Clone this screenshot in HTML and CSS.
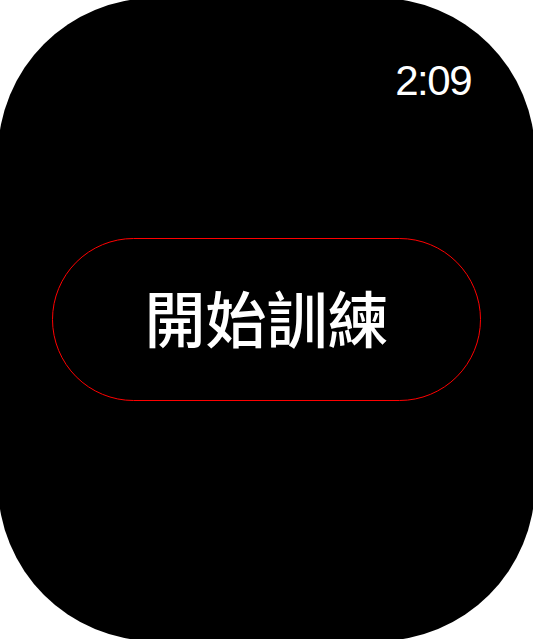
FILE: index.html
```html
<!DOCTYPE html>
<html lang="zh-Hant">
<head>
<meta charset="utf-8">
<title>開始訓練</title>
<link rel="stylesheet" href="styles.css">
</head>
<body>
<div class="screen">
  <div class="time">2:09</div>
  <button class="start-btn">開始訓練</button>
</div>
</body>
</html>
```

FILE: styles.css
```css
html, body {
  margin: 0;
  padding: 0;
  background: #ffffff;
  overflow: hidden;
}

.screen {
  box-sizing: border-box;
  width: calc(100vw + 4px);
  height: calc(100vh + 4px);
  margin: -2px;
  background: #000000;
  border-radius: 157px;
  display: grid;
  grid-template: 1fr / 1fr;
}

.time {
  grid-area: 1 / 1;
  justify-self: end;
  align-self: start;
  margin-top: 62px;
  margin-right: 64px;
  color: #ffffff;
  font-family: "Liberation Sans", Arial, sans-serif;
  font-size: 42px;
  letter-spacing: -1.5px;
  line-height: 1;
}

.start-btn {
  grid-area: 1 / 1;
  justify-self: center;
  align-self: center;
  box-sizing: border-box;
  width: 429px;
  height: 163px;
  border: 1px solid #ff0000;
  border-radius: 82px;
  background: #000000;
  color: #ffffff;
  font-family: "Noto Sans CJK TC", "Noto Sans CJK SC", sans-serif;
  font-size: 61px;
  font-weight: 500;
  padding: 0 0 6px;
  margin: 0;
}
```
